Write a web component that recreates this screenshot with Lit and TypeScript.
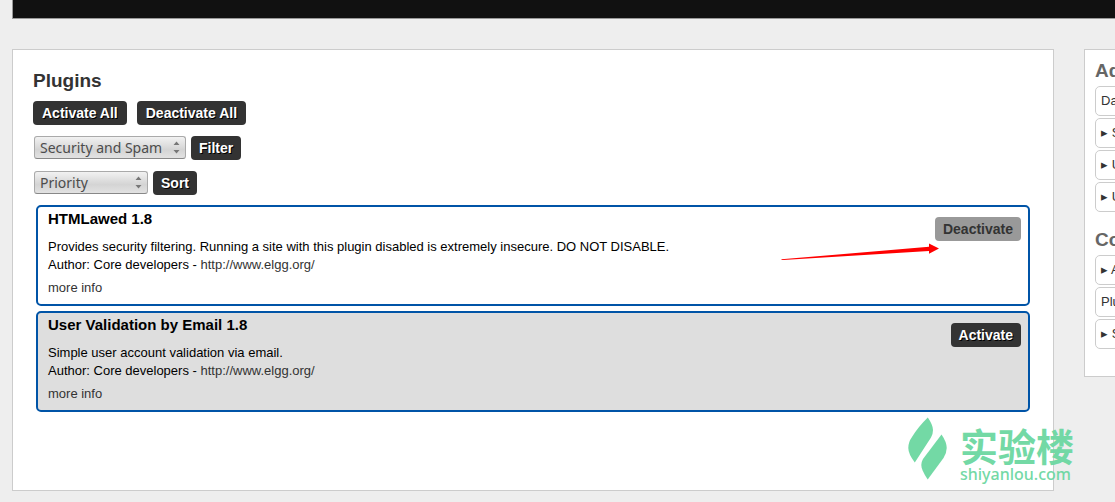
import { LitElement, html, css, svg, nothing } from "lit";
import { customElement, property } from "lit/decorators.js";

interface Plugin {
  name: string;
  description: string;
  active: boolean;
}

const plugins: Plugin[] = [
  {
    name: "HTMLawed 1.8",
    description:
      "Provides security filtering. Running a site with this plugin disabled is extremely insecure. DO NOT DISABLE.",
    active: true,
  },
  {
    name: "User Validation by Email 1.8",
    description: "Simple user account validation via email.",
    active: false,
  },
];

const menus = [
  {
    title: "Administer",
    items: [
      { label: "Dashboard", parent: false },
      { label: "Statistics", parent: true },
      { label: "Users", parent: true },
      { label: "Utilities", parent: true },
    ],
  },
  {
    title: "Configure",
    items: [
      { label: "Appearance", parent: true },
      { label: "Plugins", parent: false },
      { label: "Settings", parent: true },
    ],
  },
];

const buttonStyles = css`
  .button {
    box-sizing: border-box;
    height: 24px;
    margin: 0;
    padding: 0 8px;
    border: 0;
    border-radius: 4px;
    background: #333;
    color: #fff;
    font: bold 14px/24px "Liberation Sans", Arial, sans-serif;
    text-shadow: 1px 1px 0 #000;
    white-space: nowrap;
    cursor: pointer;
  }
  .wide {
    padding: 0 9px;
  }
  .muted {
    background: #999;
    color: #333;
    text-shadow: none;
  }
`;

@customElement("plugin-card")
class PluginCard extends LitElement {
  @property({ attribute: false }) plugin!: Plugin;

  static styles = [
    buttonStyles,
    css`
      :host {
        display: block;
      }
      .card {
        position: relative;
        display: flex;
        justify-content: space-between;
        align-items: flex-start;
        gap: 16px;
        padding: 2px 7px 7px 10px;
        border: 2px solid #0054a7;
        border-radius: 5px;
        background: #fff;
      }
      .inactive {
        background: #dedede;
      }
      .name {
        margin: 0 0 9px;
        font-size: 15px;
        line-height: 20px;
      }
      .text {
        margin: 0;
        line-height: 18px;
      }
      .more {
        margin: 5px 0 0;
        line-height: 18px;
      }
      a {
        color: #333;
        text-decoration: none;
      }
      .action {
        margin-top: 8px;
      }
      .pointer {
        position: absolute;
        top: 36px;
        right: 88px;
      }
    `,
  ];

  render() {
    const { name, description, active } = this.plugin;
    return html`
      <article class="card ${active ? "" : "inactive"}">
        <div>
          <h3 class="name">${name}</h3>
          <p class="text">${description}</p>
          <p class="text">
            Author: Core developers - <a href="#">http://www.elgg.org/</a>
          </p>
          <p class="more"><a href="#">more info</a></p>
        </div>
        <button class="button action ${active ? "muted" : ""}" type="button">
          ${active ? "Deactivate" : "Activate"}
        </button>
        ${active
          ? html`<svg class="pointer" width="159" height="18" viewBox="0 0 159 18" aria-hidden="true">
              <path d="M0.5 16.3 L148 3.8 V0.5 L158 5.500 L148 10.800 V8 L2 17 L0.5 17Z" fill="#f00" />
            </svg>`
          : nothing}
      </article>
    `;
  }
}

@customElement("app-root")
class AppRoot extends LitElement {
  static styles = [
    buttonStyles,
    css`
      :host {
        position: relative;
        display: block;
        box-sizing: border-box;
        min-height: 100vh;
        padding: 0 0 11px 12px;
        overflow: hidden;
        background: #eee;
        color: #000;
        font: 13px/18px "Liberation Sans", Arial, sans-serif;
      }
      .header {
        height: 18px;
        border-left: 1px solid #999;
        border-bottom: 1px solid #999;
        background: #111;
      }
      .layout {
        display: flex;
        align-items: flex-start;
        gap: 30px;
        margin: 30px -179px 0 0;
      }
      .panel {
        box-sizing: border-box;
        border: 1px solid #ccc;
        background: #fff;
      }
      .main {
        flex: 1;
        min-width: 0;
        padding: 20px 20px 78px;
      }
      .title {
        margin: 0 0 9px;
        color: #333;
        font-size: 19px;
        line-height: 22px;
      }
      .row {
        display: flex;
        gap: 10px;
        margin-bottom: 11px;
      }
      .field {
        gap: 5px;
        padding-left: 1px;
      }
      .select {
        appearance: none;
        box-sizing: border-box;
        width: 152px;
        height: 23px;
        margin: 0;
        padding: 0 20px 0 5px;
        border: 1px solid #aaa;
        border-bottom-color: #888;
        border-radius: 3px;
        background:
          url("data:image/svg+xml,%3Csvg xmlns='http://www.w3.org/2000/svg' width='7' height='13'%3E%3Cpath d='M0.5 4L3.5 0.5L6.5 4ZM0.5 9L3.5 12.5L6.5 9Z' fill='%23777'/%3E%3C/svg%3E")
            no-repeat right 5px center,
          linear-gradient(#f2f2f2, #d4d4d4 60%, #e2e2e2);
        color: #4c4c4c;
        font: 14px/20px "Noto Sans", "Open Sans", sans-serif;
      }
      .narrow {
        width: 114px;
      }
      .list {
        display: grid;
        gap: 5px;
        margin: -1px 3px 0;
      }
      .sidebar {
        flex: 0 0 210px;
        padding: 10px 10px 27px;
      }
      .heading {
        margin: 0 0 4px;
        color: #666;
        font-size: 19px;
        line-height: 22px;
      }
      .menu {
        display: grid;
        gap: 2px;
        margin: 0 0 17px;
        padding: 0;
        list-style: none;
      }
      .menu:last-child {
        margin: 0;
      }
      .item {
        display: block;
        padding: 5px;
        border: 1px solid #ccc;
        border-radius: 5px;
        color: #333;
        line-height: 18px;
        text-decoration: none;
      }
      .watermark {
        position: absolute;
        right: 41px;
        bottom: 15px;
        display: flex;
        align-items: flex-start;
        gap: 13px;
        color: #6fd8a3;
        opacity: 0.97;
        pointer-events: none;
      }
      .mark {
        margin-bottom: 6px;
      }
      .brand {
        padding-top: 8px;
        font: bold 38px/40px "Noto Sans CJK SC", sans-serif;
        white-space: nowrap;
      }
      .domain {
        display: block;
        font: 500 16px/18px "Noto Sans", sans-serif;
      }
    `,
  ];

  render() {
    return html`
      <header class="header"></header>
      <div class="layout">
        <main class="panel main">
          <h2 class="title">Plugins</h2>
          <div class="row">
            <button class="button wide" type="button">Activate All</button>
            <button class="button wide" type="button">Deactivate All</button>
          </div>
          <form class="row field">
            <select class="select" aria-label="Category">
              <option>Security and Spam</option>
            </select>
            <button class="button" type="button">Filter</button>
          </form>
          <form class="row field">
            <select class="select narrow" aria-label="Sort order">
              <option>Priority</option>
            </select>
            <button class="button" type="button">Sort</button>
          </form>
          <div class="list">
            ${plugins.map((p) => html`<plugin-card .plugin=${p}></plugin-card>`)}
          </div>
        </main>
        <aside class="panel sidebar">
          ${menus.map(
            (menu) => html`
              <h2 class="heading">${menu.title}</h2>
              <ul class="menu">
                ${menu.items.map(
                  (item) => html`<li><a class="item" href="#">${item.parent ? "▸ " : ""}${item.label}</a></li>`
                )}
              </ul>
            `
          )}
        </aside>
      </div>
      <div class="watermark">
        <svg class="mark" width="39" height="64" viewBox="0 0 39 64" fill="currentColor" aria-hidden="true">
          ${svg`
            <path d="M19.800 .5Q25 8 25 13Q25 17 23 20.500L6.800 45.500Q.3 37 .3 31Q.3 25 4 20Q10 10 19.800 .5Z" />
            <path d="M33.500 17.500Q38.700 25 38.700 31Q38.700 36 35.500 41L19.700 62.500Q13.300 53 13.300 48Q13.300 45 15 42Z" />
          `}
        </svg>
        <div class="brand">实验楼<span class="domain">shiyanlou.com</span></div>
      </div>
    `;
  }
}
